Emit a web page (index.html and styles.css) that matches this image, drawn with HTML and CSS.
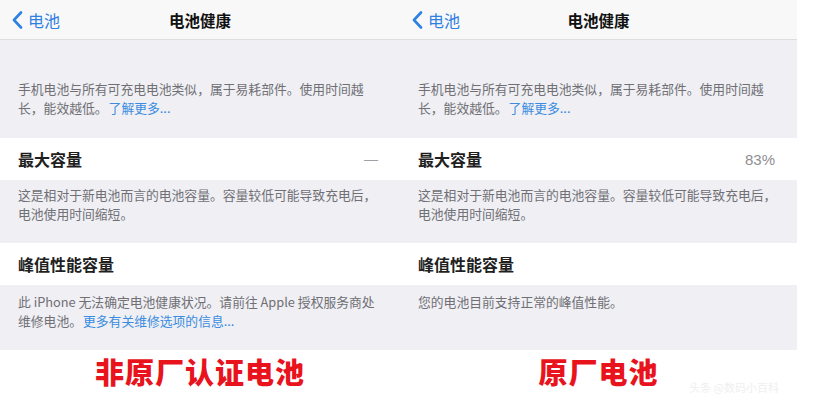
FILE: index.html
```html
<!DOCTYPE html>
<html lang="zh-CN">
<head>
<meta charset="utf-8">
<link rel="stylesheet" href="styles.css">
</head>
<body>
<div class="board">
  <section class="panel panel-left">
    <header class="nav">
      <div class="back">
        <svg class="chev" width="11" height="18" viewBox="0 0 11 18"><path d="M9 1.5 L2 9 L9 16.5" fill="none" stroke="#2f80e0" stroke-width="2.6" stroke-linecap="round" stroke-linejoin="round"/></svg>
        <span>电池</span>
      </div>
      <div class="title">电池健康</div>
      <div></div>
    </header>
    <div class="note note-top">手机电池与所有可充电电池类似，属于易耗部件。使用时间越<br>长，能效越低。<span class="link">了解更多...</span></div>
    <div class="row"><span class="label">最大容量</span><span class="value dash">—</span></div>
    <div class="note note-mid">这是相对于新电池而言的电池容量。容量较低可能导致充电后，<br>电池使用时间缩短。</div>
    <div class="row"><span class="label">峰值性能容量</span></div>
    <div class="note note-bot">此 iPhone 无法确定电池健康状况。请前往 Apple 授权服务商处<br>维修电池。<span class="link">更多有关维修选项的信息...</span></div>
    <div class="caption">非原厂认证电池</div>
  </section>
  <section class="panel panel-right">
    <header class="nav">
      <div class="back">
        <svg class="chev" width="11" height="18" viewBox="0 0 11 18"><path d="M9 1.5 L2 9 L9 16.5" fill="none" stroke="#2f80e0" stroke-width="2.6" stroke-linecap="round" stroke-linejoin="round"/></svg>
        <span>电池</span>
      </div>
      <div class="title">电池健康</div>
      <div></div>
    </header>
    <div class="note note-top">手机电池与所有可充电电池类似，属于易耗部件。使用时间越<br>长，能效越低。<span class="link">了解更多...</span></div>
    <div class="row"><span class="label">最大容量</span><span class="value">83%</span></div>
    <div class="note note-mid">这是相对于新电池而言的电池容量。容量较低可能导致充电后，<br>电池使用时间缩短。</div>
    <div class="row"><span class="label">峰值性能容量</span></div>
    <div class="note note-bot">您的电池目前支持正常的峰值性能。</div>
    <div class="caption">原厂电池</div>
    <div class="mark">头条 @数码小百科</div>
  </section>
</div>
</body>
</html>
```
FILE: styles.css
```css
html, body {
  margin: 0;
  padding: 0;
  background: #ffffff;
}
body {
  width: 813px;
  height: 401px;
  overflow: hidden;
  font-family: "Noto Sans CJK SC", "Noto Sans", sans-serif;
}
.board {
  display: flex;
  width: 813px;
}
.panel {
  display: flex;
  flex-direction: column;
  position: relative;
}
.panel-left { width: 400px; }
.panel-right { width: 397px; }

.nav {
  height: 40px;
  box-sizing: border-box;
  background: #f8f8f9;
  border-bottom: 1px solid #dedee2;
  display: grid;
  grid-template-columns: 1fr auto 1fr;
  align-items: center;
  padding: 0 12px;
}
.back {
  display: flex;
  align-items: center;
  gap: 5px;
  color: #2f80e0;
  font-size: 16px;
  line-height: 20px;
}
.title {
  font-size: 15.5px;
  line-height: 20px;
  font-weight: 700;
  color: #111;
}

.note {
  background: #efeff4;
  color: #6f6f74;
  font-size: 12.8px;
  line-height: 18.6px;
  padding: 0 4px 0 18px;
  box-sizing: border-box;
  white-space: nowrap;
  text-spacing-trim: space-all;
}
.note-top { height: 98px; padding-top: 40px; }
.note-mid { height: 63px; padding-top: 6px; }
.note-bot { height: 65px; padding-top: 8px; }
.link {
  color: #3a8ce0;
  margin-left: 1px;
}

.row {
  height: 42px;
  background: #ffffff;
  display: flex;
  align-items: center;
  justify-content: space-between;
  padding: 0 22px 0 18px;
}
.label {
  font-size: 16px;
  font-weight: 700;
  color: #1f1f1f;
}
.value {
  font-size: 15px;
  color: #8e8e93;
  font-family: "Liberation Sans", "Noto Sans", sans-serif;
}
.dash { font-size: 14px; color: #a0a0a5; }

.caption {
  flex: 1;
  display: flex;
  align-items: center;
  justify-content: center;
  color: #e8131c;
  font-size: 29px;
  font-weight: 900;
  height: 51px;
  letter-spacing: 1px;
}
.mark {
  position: absolute;
  right: 18px;
  bottom: -3px;
  font-size: 11px;
  color: #efeff1;
}
```
